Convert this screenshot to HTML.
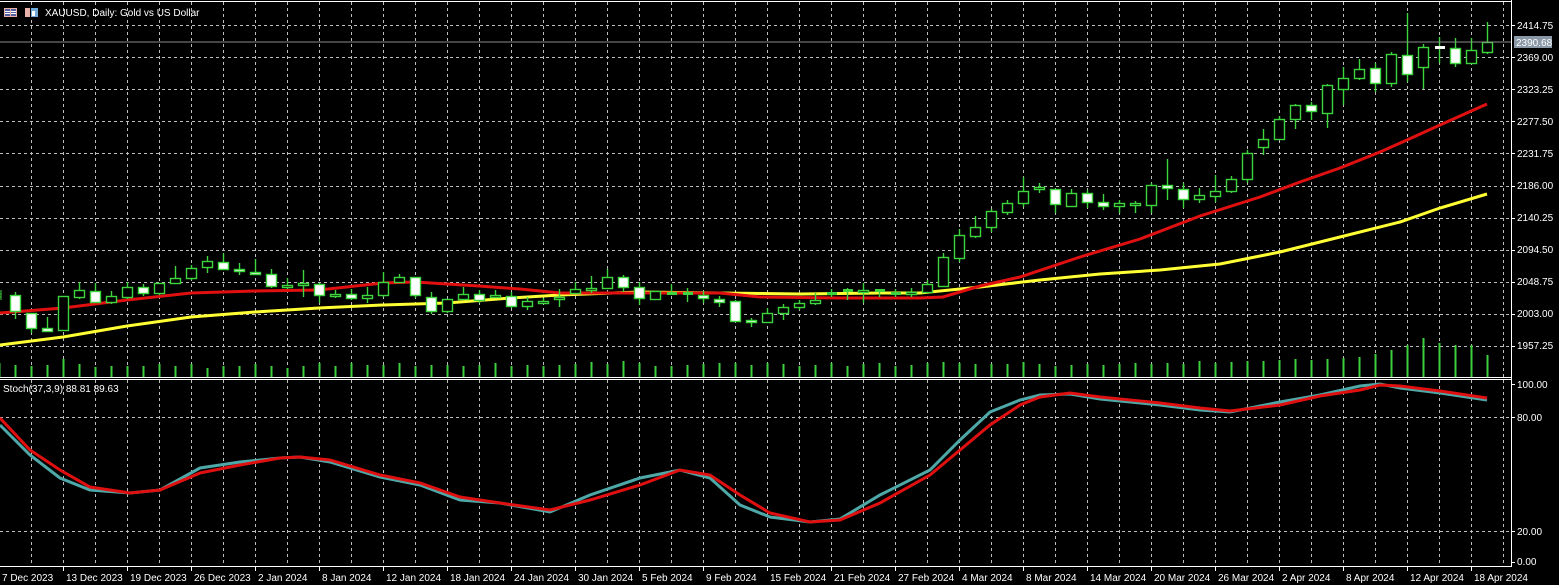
<!DOCTYPE html>
<html><head><meta charset="utf-8"><style>
html,body{margin:0;padding:0;background:#000;width:1559px;height:585px;overflow:hidden}
svg{display:block}
text{font-family:"Liberation Sans",sans-serif;font-size:10px;fill:#fff}
</style></head><body>
<svg id="s" width="1559" height="585" xmlns="http://www.w3.org/2000/svg">
<rect width="1559" height="585" fill="#000"/>
<g id="grid"></g>
<g id="vol"></g>
<polyline fill="none" stroke="#ffff33" stroke-width="3" points="0,345 63,337 127,326 191,317 255,312 319,308 383,305 447,303 511,298 560,295 640,292 720,293 800,294 880,293 920,293 980,287 1040,280 1100,274 1160,270 1220,264 1280,252 1340,237 1400,222 1440,208 1487,194"/>
<polyline fill="none" stroke="#e01010" stroke-width="3" points="0,313 63,308 127,300 191,293 255,291 319,290 383,283 415,282 479,286 520,289 560,293 640,293 720,293 760,297 840,298 920,298 943,297 980,286 1020,277 1080,257 1140,239 1200,216 1260,197 1300,182 1340,168 1380,152 1407,140 1440,125 1487,104"/>
<g id="candles"></g>
<line x1="0" y1="42" x2="1511" y2="42" stroke="#8a8a8a" stroke-width="1"/>
<polyline id="stm" fill="none" stroke="#4fa8a8" stroke-width="3"/>
<polyline id="sts" fill="none" stroke="#e01010" stroke-width="3"/>
<!-- frames -->
<line x1="0" y1="1.5" x2="1511" y2="1.5" stroke="#fff"/>
<line x1="0" y1="377.5" x2="1511" y2="377.5" stroke="#fff"/>
<line x1="0" y1="379.5" x2="1511" y2="379.5" stroke="#fff"/>
<line x1="0" y1="566.5" x2="1511" y2="566.5" stroke="#fff"/>
<line x1="1511.5" y1="0" x2="1511.5" y2="567" stroke="#fff"/>
<g id="ticks" stroke="#fff"></g>
<!-- header -->
<rect x="4" y="8" width="13" height="9" fill="#e8b0a8"/>
<rect x="5" y="9" width="11" height="7" fill="#5060a0"/>
<line x1="5" y1="11.5" x2="16" y2="11.5" stroke="#fff"/><line x1="5" y1="13.5" x2="16" y2="13.5" stroke="#fff"/><line x1="10.5" y1="9" x2="10.5" y2="16" stroke="#e8b0a8"/>
<rect x="25" y="8" width="5" height="9" fill="#e8b0a8"/><rect x="31" y="8" width="7" height="9" fill="#70a8d8"/><rect x="32" y="11" width="3" height="5" fill="#fff"/>
<text x="45" y="16" font-size="10">XAUUSD, Daily:  Gold vs US Dollar</text>
<text x="3" y="392">Stoch(37,3,9) 88.81 89.63</text>
<!-- price labels -->
<text x="1517" y="29">2414.75</text>
<rect x="1514" y="36" width="38" height="12" fill="#8a98a8"/>
<text x="1516" y="46" style="fill:#fff">2390.68</text>
<text x="1517" y="61">2369.00</text>
<text x="1517" y="93">2323.25</text>
<text x="1517" y="125">2277.50</text>
<text x="1517" y="157">2231.75</text>
<text x="1517" y="189">2186.00</text>
<text x="1517" y="221">2140.25</text>
<text x="1517" y="253">2094.50</text>
<text x="1517" y="285">2048.75</text>
<text x="1517" y="317">2003.00</text>
<text x="1517" y="349">1957.25</text>
<text x="1517" y="388">100.00</text>
<text x="1517" y="421">80.00</text>
<text x="1517" y="535">20.00</text>
<text x="1517" y="565">0.00</text>
<g id="dates"></g>
</svg>
<script>
var NS="http://www.w3.org/2000/svg";
function el(p,t,a){var e=document.createElementNS(NS,t);for(var k in a)e.setAttribute(k,a[k]);p.appendChild(e);return e;}
var g=document.getElementById('grid');
for(var x=31;x<1511;x+=32)el(g,'line',{x1:x+.5,y1:2,x2:x+.5,y2:566,stroke:'#bdbdbd','stroke-dasharray':'3,3','stroke-width':1});
for(var i=0;i<11;i++){var y=Math.round(25+32.1*i)+.5;el(g,'line',{x1:0,y1:y,x2:1511,y2:y,stroke:'#bdbdbd','stroke-dasharray':'3,3'});}
[417.5,531.5].forEach(function(y){el(g,'line',{x1:0,y1:y,x2:1511,y2:y,stroke:'#bdbdbd','stroke-dasharray':'3,3'});});
var tk=document.getElementById('ticks');
[25,57,89,121,153,186,218,250,282,314,346,384,417,531,562].forEach(function(y){el(tk,'line',{x1:1511,y1:y+.5,x2:1515,y2:y+.5});});
// candles: [o,c,h,l] in y pixels; bear if o<c (white)
var C=[[295,311,292,319],[313,328,313,333],[328,331,317,332],[330,296,296,330],[297,290,282,299],[291,302,283,303],[302,296,291,304],[297,287,282,299],[287,293,284,296],[293,283,283,295],[283,278,266,283],[278,268,265,280],[267,261,256,273],[262,269,253,270],[269,271,263,275],[272,274,259,275],[274,286,269,288],[287,285,278,289],[285,283,270,297],[284,295,283,303],[296,294,290,298],[294,298,289,300],[298,295,287,303],[295,282,272,297],[282,277,274,283],[277,295,277,298],[297,311,292,314],[311,299,299,313],[299,294,287,300],[294,300,290,303],[297,295,290,298],[296,306,292,308],[306,301,297,310],[303,301,298,304],[299,297,289,307],[293,289,282,293],[290,288,276,293],[288,277,269,288],[277,287,275,292],[287,298,282,305],[299,291,291,300],[293,293,284,294],[293,293,288,302],[295,298,291,303],[299,302,296,307],[301,321,300,322],[320,322,318,327],[322,313,308,323],[313,307,304,320],[307,303,300,310],[303,300,293,305],[294,293,289,297],[291,290,288,300],[292,290,283,303],[291,290,289,297],[294,293,289,297],[294,292,288,297],[292,284,280,293],[286,257,253,287],[258,235,229,262],[236,227,216,238],[227,211,209,232],[212,203,200,215],[203,191,177,207],[189,187,183,193],[189,204,189,213],[206,193,189,207],[193,202,190,208],[202,206,194,210],[206,203,200,213],[205,203,201,213],[205,185,183,213],[185,188,159,200],[189,199,183,208],[199,195,188,203],[196,191,175,202],[191,179,176,193],[179,153,150,183],[147,139,129,155],[139,119,116,140],[119,105,104,129],[105,111,102,120],[113,85,84,128],[89,78,67,105],[78,69,59,80],[68,83,63,92],[83,54,52,87],[55,74,13,82],[67,47,44,89],[47,48,37,63],[48,63,38,67],[63,50,38,64],[52,42,22,54]];
var cg=document.getElementById('candles');
var col='#3ed43e';
el(cg,'line',{x1:1,y1:290,x2:1,y2:300,stroke:col});
el(cg,'rect',{x:-4,y:294,width:5,height:3,fill:'none',stroke:col});
C.forEach(function(c,k){var x=15+16*k;var bear=c[0]<c[1];var t=Math.min(c[0],c[1]),b=Math.max(c[0],c[1]);
el(cg,'line',{x1:x+.5,y1:c[2],x2:x+.5,y2:c[3],stroke:col,'stroke-width':1.4});
if(b-t<2){el(cg,'rect',{x:x-4,y:t-1,width:10,height:3,fill:bear?'#fff':col});}
else el(cg,'rect',{x:x-4.5,y:t+.5,width:10,height:b-t,fill:bear?'#fff':'#000',stroke:col,'stroke-width':1.4});});
// volumes
var vg=document.getElementById('vol');
var VT=[363,365,366,365,359,364,367,366,366,366,364,366,364,368,366,366,364,366,368,366,363,366,363,365,365,363,366,365,365,366,365,363,366,365,366,365,364,362,364,361,363,366,366,365,364,363,363,365,363,364,366,365,363,366,364,363,366,365,363,362,363,364,364,364,362,364,366,365,364,365,364,363,364,363,364,361,363,362,361,361,360,359,360,359,358,357,354,350,345,338,343,345,345,355,344];
for(var k=-1;k<93;k++){var x=15+16*k;var t=VT[k+1]||364;el(vg,'line',{x1:x+.5,y1:t,x2:x+.5,y2:377,stroke:'#3ecf3e','stroke-width':2});}
// stoch
var SM="0,425 30,455 60,478 90,490 130,493 160,490 200,468 240,462 280,458 300,457 330,462 380,477 420,485 460,500 500,503 550,512 590,495 640,478 680,470 710,478 740,505 770,517 810,522 840,519 880,495 930,470 960,440 990,412 1020,400 1040,395 1070,394 1100,399 1160,405 1200,410 1230,412 1280,402 1320,395 1360,386 1380,384 1400,388 1440,393 1487,400";
var SS="0,418 30,450 60,470 90,487 130,493 160,490 200,473 240,465 280,458 300,457 330,460 380,475 420,483 460,497 500,503 550,510 590,500 640,485 680,470 710,475 740,495 770,513 810,522 840,520 880,503 930,475 960,450 990,425 1020,405 1040,397 1070,393 1100,397 1160,403 1200,408 1230,411 1280,405 1320,396 1360,390 1380,385 1400,386 1440,391 1487,398";
document.getElementById('stm').setAttribute('points',SM);
document.getElementById('sts').setAttribute('points',SS);
var D=["7 Dec 2023","13 Dec 2023","19 Dec 2023","26 Dec 2023","2 Jan 2024","8 Jan 2024","12 Jan 2024","18 Jan 2024","24 Jan 2024","30 Jan 2024","5 Feb 2024","9 Feb 2024","15 Feb 2024","21 Feb 2024","27 Feb 2024","4 Mar 2024","8 Mar 2024","14 Mar 2024","20 Mar 2024","26 Mar 2024","2 Apr 2024","8 Apr 2024","12 Apr 2024","18 Apr 2024"];
var dg=document.getElementById('dates');
D.forEach(function(d,i){var x=-1+64*i;el(tk,'line',{x1:x+.5,y1:566,x2:x+.5,y2:571});var t=el(dg,'text',{x:x+3,y:581});t.textContent=d;});
</script>
</body></html>
